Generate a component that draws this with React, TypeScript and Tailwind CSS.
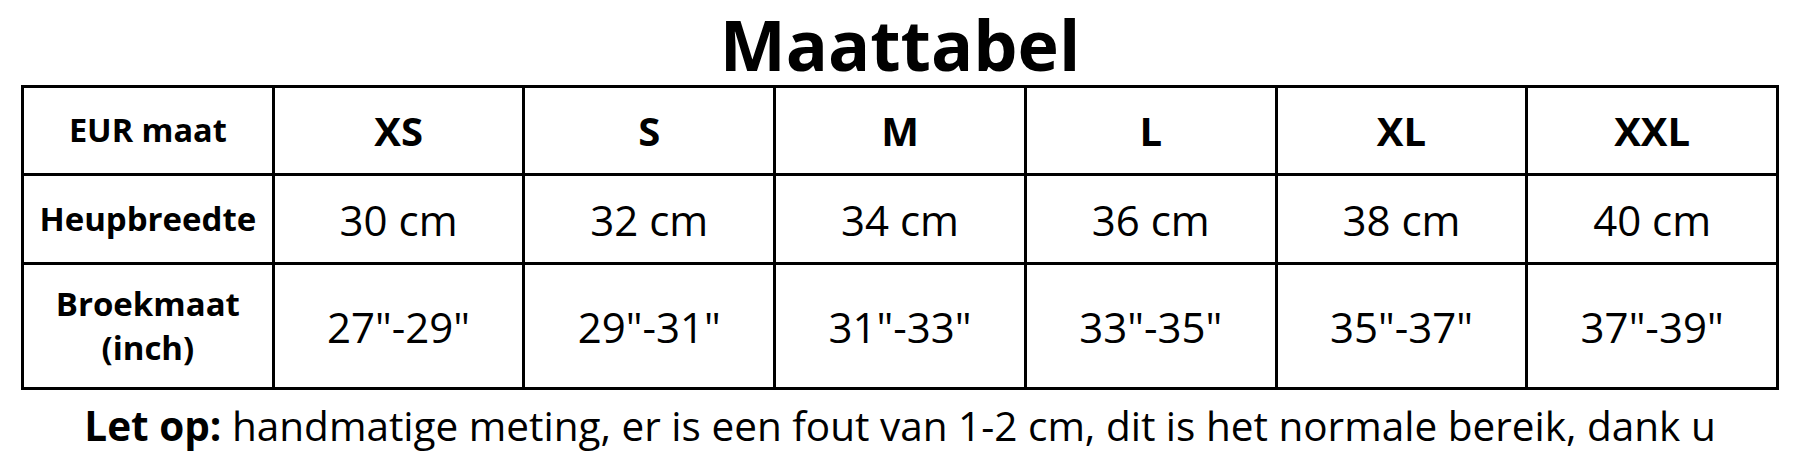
import React from "react";

const sizes = ["XS", "S", "M", "L", "XL", "XXL"];
const hips = ["30 cm", "32 cm", "34 cm", "36 cm", "38 cm", "40 cm"];
const pants = ['27"-29"', '29"-31"', '31"-33"', '33"-35"', '35"-37"', '37"-39"'];

export default function App() {
  return (
    <div
      className="w-[1800px] h-[458px] bg-white text-black"
      style={{ fontFamily: '"Open Sans", "Noto Sans", sans-serif' }}
    >
      <h1 className="pt-[8px] mb-[5px] text-center text-[70px] leading-[72px] font-bold">
        Maattabel
      </h1>
      <div className="ml-[21px] w-[1758px] bg-black p-[3px] grid grid-cols-7 grid-rows-[85px_86px_122px] gap-[3px]">
        <div className="bg-white flex items-center justify-center text-[32.5px] font-bold">EUR maat</div>
        {sizes.map((s) => (
          <div key={s} className="bg-white flex items-center justify-center text-[40px] font-bold">
            {s}
          </div>
        ))}
        <div className="bg-white flex items-center justify-center text-[33px] font-bold">Heupbreedte</div>
        {hips.map((h) => (
          <div key={h} className="bg-white flex items-center justify-center text-[42px]">
            {h}
          </div>
        ))}
        <div className="bg-white flex flex-col items-center justify-center text-[33px] leading-[44px] font-bold text-center">
          <span>Broekmaat</span>
          <span>(inch)</span>
        </div>
        {pants.map((p) => (
          <div key={p} className="bg-white flex items-center justify-center text-[42px]">
            {p}
          </div>
        ))}
      </div>
      <p className="mt-[12px] text-center text-[40.5px] leading-[48px] whitespace-nowrap">
        <span className="font-bold">Let op:</span> handmatige meting, er is een fout van 1-2 cm, dit is het normale bereik, dank u
      </p>
    </div>
  );
}
